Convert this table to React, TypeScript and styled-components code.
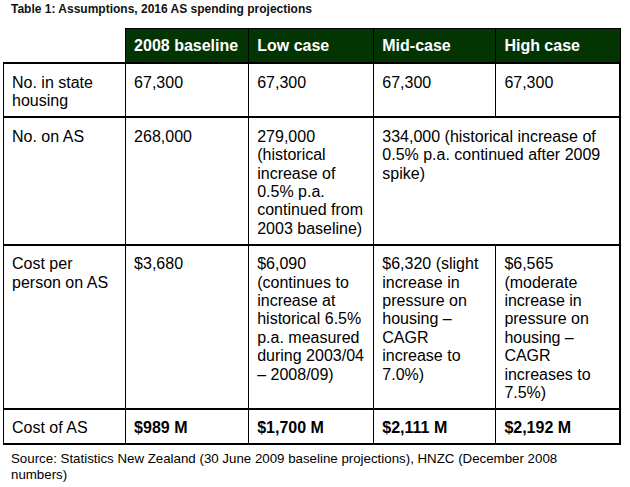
import React from "react";
import styled, { createGlobalStyle } from "styled-components";

const Global = createGlobalStyle`
  html, body { margin: 0; padding: 0; background: #fff; }
  body { font-family: "Liberation Sans", Arial, sans-serif; color: #000; }
`;

const Page = styled.div`
  width: 630px;
  padding: 2px 0 0 3px;
  box-sizing: border-box;
`;

const Title = styled.div`
  font-size: 12px;
  font-weight: bold;
  line-height: 14px;
  padding-left: 8px;
  color: #111;
  margin-bottom: 12px;
`;

const Table = styled.table`
  border-collapse: collapse;
  table-layout: fixed;
  width: 618px;
  font-size: 16px;
  line-height: 18.4px;
`;

const HeadCell = styled.th<{ $blank?: boolean }>`
  text-align: left;
  font-weight: bold;
  padding: 8px 3px 7px 8px;
  color: #fff;
  background: ${(p) => (p.$blank ? "#fff" : "#033503")};
  border: ${(p) => (p.$blank ? "none" : "1px solid #000")};
  border-bottom: 2px solid #000;
`;

const Cell = styled.td<{ $bold?: boolean }>`
  vertical-align: top;
  padding: 9.5px 3px 5.5px 8px;
  font-weight: ${(p) => (p.$bold ? "bold" : "normal")};
  border-left: 1px solid #000;
  border-right: 1px solid #000;
  border-top: 2px solid #000;
  border-bottom: 2px solid #000;
  &:first-child { border-left: 1.5px solid #000; }
  &:last-child { border-right: 2px solid #000; }
`;

const Footer = styled.div`
  font-size: 13.3px;
  line-height: 16px;
  padding-left: 8px;
  margin-top: 6px;
  width: 590px;
`;

const rows: { label: string; cells: { text: string; span?: number }[]; bold?: boolean }[] = [
  { label: "No. in state housing", cells: [{ text: "67,300" }, { text: "67,300" }, { text: "67,300" }, { text: "67,300" }] },
  {
    label: "No. on AS",
    cells: [
      { text: "268,000" },
      { text: "279,000 (historical increase of 0.5% p.a. continued from 2003 baseline)" },
      { text: "334,000 (historical increase of 0.5% p.a. continued after 2009 spike)", span: 2 },
    ],
  },
  {
    label: "Cost per person on AS",
    cells: [
      { text: "$3,680" },
      { text: "$6,090 (continues to increase at historical 6.5% p.a. measured during 2003/04 \u2013 2008/09)" },
      { text: "$6,320 (slight increase in pressure on housing \u2013 CAGR increase to 7.0%)" },
      { text: "$6,565 (moderate increase in pressure on housing \u2013 CAGR increases to 7.5%)" },
    ],
  },
  {
    label: "Cost of AS",
    bold: true,
    cells: [{ text: "$989 M" }, { text: "$1,700 M" }, { text: "$2,111 M" }, { text: "$2,192 M" }],
  },
];

export default function App() {
  return (
    <Page>
      <Global />
      <Title>Table 1: Assumptions, 2016 AS spending projections</Title>
      <Table>
        <colgroup>
          <col style={{ width: 122 }} />
          <col style={{ width: 123 }} />
          <col style={{ width: 125 }} />
          <col style={{ width: 122 }} />
          <col style={{ width: 124 }} />
        </colgroup>
        <thead>
          <tr>
            <HeadCell $blank />
            <HeadCell>2008 baseline</HeadCell>
            <HeadCell>Low case</HeadCell>
            <HeadCell>Mid-case</HeadCell>
            <HeadCell>High case</HeadCell>
          </tr>
        </thead>
        <tbody>
          {rows.map((r) => (
            <tr key={r.label}>
              <Cell>{r.label}</Cell>
              {r.cells.map((c, i) => (
                <Cell key={i} colSpan={c.span} $bold={r.bold}>
                  {c.text}
                </Cell>
              ))}
            </tr>
          ))}
        </tbody>
      </Table>
      <Footer>
        Source: Statistics New Zealand (30 June 2009 baseline projections), HNZC (December 2008 numbers)
      </Footer>
    </Page>
  );
}
